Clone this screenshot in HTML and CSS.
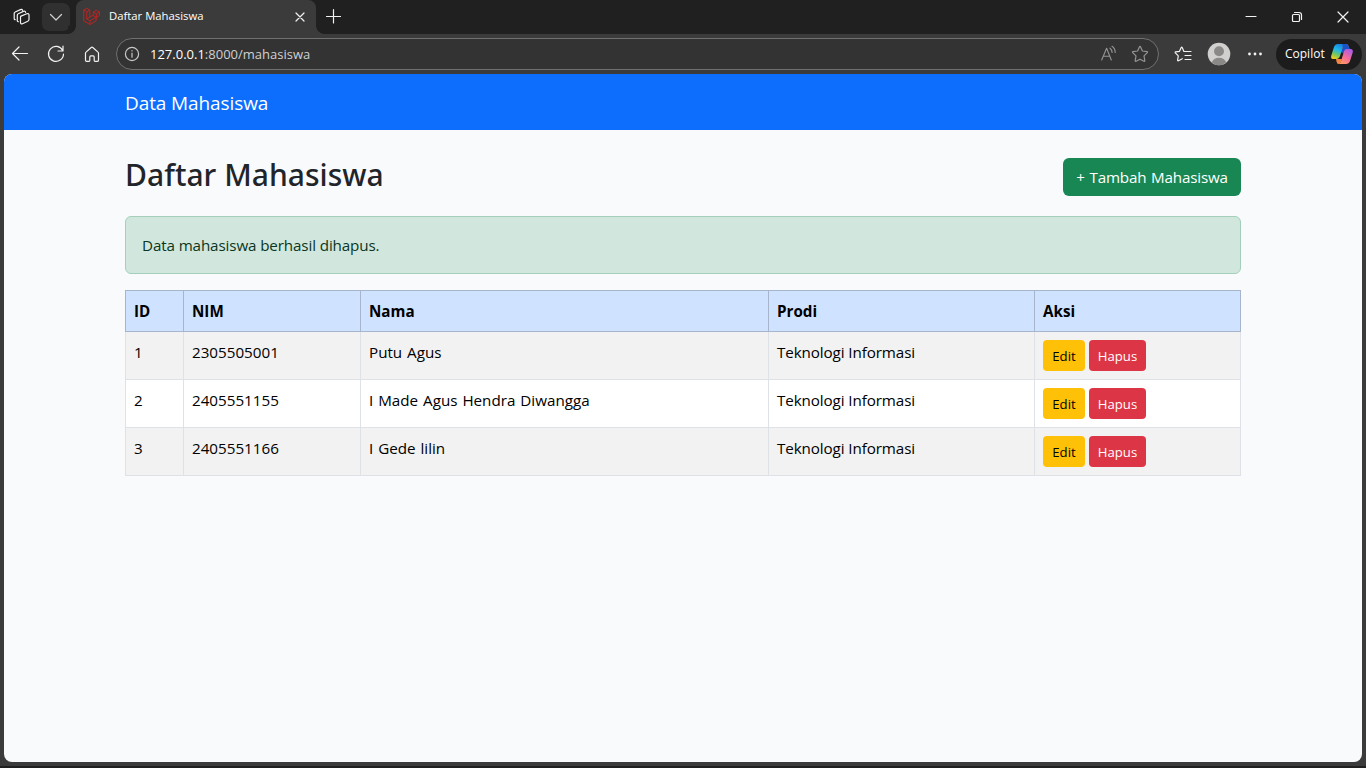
FILE: index.html
```html
<!DOCTYPE html>
<html lang="id">
<head>
<meta charset="utf-8">
<title>Daftar Mahasiswa</title>
<link rel="stylesheet" href="styles.css">
</head>
<body>
<div class="browser">
  <header class="tabstrip">
    <div class="workspaces">
      <svg width="18" height="18" viewBox="0 0 18 18" class="icon"><path d="M8 8.100 13.800 5.800Q16 5 16 7.100V11.600Q16 12.800 14.800 13.300L9.500 15.700Q7.500 16.500 7.500 14.600V9.200Q7.500 8.300 8 8.100ZM5.300 13.700Q4.300 13.800 4.300 12.500V7.300Q4.300 6.200 5.300 5.800L10.400 3.400Q12.300 2.700 12.600 4.300M2.200 11.600Q1.200 11.600 1.200 10.400V5.500Q1.200 4.400 2.200 4L7.400 1.600Q9.200.9 9.500 2.300"/></svg>
    </div>
    <div class="tab-search">
      <svg width="14" height="14" viewBox="0 0 14 14" class="icon dim"><path d="M1.500 4.500 7 10l5.500-5.500"/></svg>
    </div>
    <div class="tab">
      <svg width="17" height="17" viewBox="-.5 0 50 52" class="laravel"><path d="M.7 6.500 10 1l9.400 5.500L10 12zM.7 6.500V39.300L19.400 50.500 38.600 39.300V28.800M10 12V33.600L19.400 28V6.500M10 33.600 19.400 39.300 48.900 22.900V12.500L39.400 7 30 12.500V22L19.400 28M19.400 39.300V50.500M30 12.500 39.400 18 48.900 12.500M39.400 18V28.800L30 23.300"/></svg>
      <span class="tab-title">Daftar Mahasiswa</span>
      <svg width="10" height="10" viewBox="0 0 10 10" class="icon tab-close"><path d="m1 1 8 8M9 1 1 9"/></svg>
    </div>
    <svg width="16" height="16" viewBox="0 0 16 16" class="icon new-tab"><path d="M8.500 1.500V15M1.500 8.500H15.500"/></svg>
    <div class="window-controls">
      <svg width="12" height="12" viewBox="0 0 12 12" class="icon"><path d="M1 5.500H11"/></svg>
      <svg width="12" height="12" viewBox="0 0 12 12" class="icon"><rect x="1.500" y="3.500" width="7" height="7" rx="1"/><path d="M3.500 1.500H8Q10.500 1.500 10.500 4V8.500"/></svg>
      <svg width="12" height="12" viewBox="0 0 12 12" class="icon"><path d="m1 1 10 10M11 1 1 11"/></svg>
    </div>
  </header>

  <div class="toolbar">
    <svg width="18" height="18" viewBox="0 0 18 18" class="icon"><path d="M16.500 8.500H1.500M8 2 1.500 8.500 8 15"/></svg>
    <svg width="18" height="18" viewBox="0 0 18 18" class="icon"><path d="M15.700 5.500A7.500 7.500 0 1 0 16.500 9M16 1V6H11"/></svg>
    <svg width="18" height="18" viewBox="0 0 18 18" class="icon"><path d="M2.500 8.200Q2.500 7.500 3 7.100L8.200 2.500Q9 1.900 9.800 2.500L15 7.100Q15.500 7.500 15.500 8.200V15Q15.500 16.300 14.500 16.300H12Q11.200 16.300 11.200 15.500V12Q11.200 10.900 10.200 10.900H7.800Q6.800 10.900 6.800 12V15.500Q6.800 16.300 6 16.300H3.500Q2.500 16.300 2.500 15z"/></svg>
    <div class="address">
      <svg width="16" height="16" viewBox="0 0 16 16" class="icon info"><circle cx="8" cy="8" r="6.600"/><path d="M8 7.200V11.200M8 4.700V5"/></svg>
      <span class="url"><b>127.0.0.1</b>:8000/mahasiswa</span>
      <svg width="18" height="18" viewBox="0 0 18 18" class="icon read"><path d="M1.700 15 6.600 3.200 11.300 15M3.300 11.200H9.700M10 3.200Q12 4.700 12.100 7.500M12 1.300Q15.200 3.500 15.200 7.500"/></svg>
      <svg width="18" height="18" viewBox="0 0 18 18" class="icon star"><path d="M8.400 1.900Q9 1 9.600 1.900L11.400 6 16 6.600Q16.900 6.900 16.300 7.600L13 10.900 13.800 15.700Q13.800 16.600 12.900 16.300L9 14.200 5.100 16.300Q4.200 16.600 4.200 15.700L5 10.900 1.700 7.600Q1.100 6.900 2 6.600L6.600 6z"/></svg>
    </div>
    <svg width="18" height="18" viewBox="0 0 18 18" class="icon favorites"><path d="M11.500 6.500H9.900L8.200 2.500Q7.700 1.700 7.200 2.500L5.500 6.300 1.600 6.900Q.8 7.100 1.300 7.800L4.300 10.800 3.600 15.200Q3.600 16 4.500 15.700L8.300 13.700M11 6.500H17M11 10.500H17M11 14.500H17"/></svg>
    <svg width="24" height="24" viewBox="0 0 24 24" class="avatar"><circle cx="12" cy="12" r="11.300" fill="#d2d0ce"/><circle cx="12" cy="9.200" r="5" fill="#8b8987"/><path d="M4.800 20.500Q6.500 15.800 12 15.800T19.200 20.500Q16 23.300 12 23.300T4.800 20.500Z" fill="#8b8987"/></svg>
    <svg width="16" height="4" viewBox="0 0 16 4" class="more"><circle cx="2.500" cy="2" r="1.400"/><circle cx="8" cy="2" r="1.400"/><circle cx="13.500" cy="2" r="1.400"/></svg>
    <div class="copilot">
      <span>Copilot</span>
      <svg width="24" height="22" viewBox="0 0 24 22">
        <defs>
          <linearGradient id="cool" x1="0.600" y1="0" x2="0.200" y2="1"><stop offset="0" stop-color="#1683de"/><stop offset=".4" stop-color="#21b8e8"/><stop offset=".68" stop-color="#70c766"/><stop offset="1" stop-color="#f5d018"/></linearGradient>
          <linearGradient id="warm" x1=".8" y1="0" x2=".2" y2="1"><stop offset="0" stop-color="#a75bea"/><stop offset=".5" stop-color="#f36a9e"/><stop offset="1" stop-color="#ff9a60"/></linearGradient>
        </defs>
        <path d="M12 1H16.500Q18 1 18.700 3.500L19.500 6H17Q15 6 14.300 8.300L12 16Q10.500 21 8.500 21 7 21 6.500 18.500L6 16z" fill="#f58443"/>
        <path d="M8 1H15.500Q13.500 1.500 12.600 4.500L10 13Q9 16 6.500 16H3Q.5 16 1.300 12.500L4 4Q5 1 8 1Z" fill="url(#cool)"/>
        <path d="M12 1H16.500Q18 1 18.700 3.500L19.500 6H17Q15 6 14.300 8.300L13.700 10.500 11.300 9 12.600 4.500Q13 1.800 12 1Z" fill="#1754ca"/>
        <path d="M11.300 9 13.700 10.500 12 16H6.500Q9 16 10 13Z" fill="#1f1f1f"/>
        <path d="M16.500 6H20.500Q23.500 6 22.700 9.500L20 18Q19 21 16 21H8.500Q10.500 20.500 11.300 17.500L14 8.500Q14.800 6 16.500 6Z" fill="url(#warm)"/>
      </svg>
    </div>
  </div>

  <div class="page">
    <nav class="navbar"><div class="container"><a class="brand">Data Mahasiswa</a></div></nav>
    <main class="container">
      <div class="heading">
        <h1>Daftar Mahasiswa</h1>
        <a class="btn btn-success">+ Tambah Mahasiswa</a>
      </div>
      <div class="alert">Data mahasiswa berhasil dihapus.</div>
      <table class="table">
        <colgroup><col class="c-id"><col class="c-nim"><col class="c-nama"><col class="c-prodi"><col class="c-aksi"></colgroup>
        <thead><tr><th>ID</th><th>NIM</th><th>Nama</th><th>Prodi</th><th>Aksi</th></tr></thead>
        <tbody>
          <tr><td>1</td><td>2305505001</td><td class="name">Putu Agus</td><td class="program">Teknologi Informasi</td><td><div class="actions"><a class="btn-sm edit">Edit</a><a class="btn-sm delete">Hapus</a></div></td></tr>
          <tr><td>2</td><td>2405551155</td><td class="name">I Made Agus Hendra Diwangga</td><td class="program">Teknologi Informasi</td><td><div class="actions"><a class="btn-sm edit">Edit</a><a class="btn-sm delete">Hapus</a></div></td></tr>
          <tr><td>3</td><td>2405551166</td><td class="name">I Gede lilin</td><td class="program">Teknologi Informasi</td><td><div class="actions"><a class="btn-sm edit">Edit</a><a class="btn-sm delete">Hapus</a></div></td></tr>
        </tbody>
      </table>
    </main>
  </div>
  <div class="edge"></div>
</div>
</body>
</html>
```
FILE: styles.css
```css
* { box-sizing: border-box; }
body { margin: 0; overflow: hidden; font: 15.2px/24px "Open Sans", "Noto Sans", sans-serif; color: #212529; }
svg { display: block; flex: none; }
.browser { width: 1366px; height: 768px; display: flex; flex-direction: column; background: #3b3b3b; }
.icon { fill: none; stroke: #f2f2f2; stroke-width: 1.2; stroke-linecap: round; stroke-linejoin: round; }
.dim { stroke: #d0d0d0; }

.tabstrip { height: 34px; flex: none; display: flex; align-items: center; background: #202020; padding-left: 13px; }
.workspaces { width: 29px; }
.tab-search { width: 28px; height: 28px; border-radius: 7px; background: #303030; display: grid; place-items: center; }
.tab { position: relative; width: 240px; height: 34px; margin-left: 6px; padding: 0 11px 2px 7px; display: flex; align-items: center; background: #3b3b3b; border-radius: 8px 8px 0 0; color: #fff; font-size: 11.3px; }
.tab::before, .tab::after { content: ""; position: absolute; bottom: 0; width: 8px; height: 8px; }
.tab::before { left: -8px; background: radial-gradient(circle at 0 0, #202020 7.5px, #3b3b3b 8px); }
.tab::after { right: -8px; background: radial-gradient(circle at 100% 0, #202020 7.5px, #3b3b3b 8px); }
.laravel { fill: none; stroke: #c5221f; stroke-width: 2.9; stroke-linejoin: round; }
.tab-title { margin-left: 9px; }
.tab-close { margin: 1px 0 0 auto; }
.new-tab { margin: -2px 0 0 9px; }
.window-controls { margin-left: auto; display: flex; gap: 34px; padding-right: 17px; }

.toolbar { height: 40px; flex: none; display: flex; align-items: center; padding: 0 5px 0 11px; gap: 18px; }
.address { width: 1043px; flex: none; height: 32px; margin-left: -3px; padding: 0 9px 0 7px; display: flex; align-items: center; border: 1px solid #707070; border-radius: 16px; background: #333; color: #d0d0d0; font-size: 13px; }
.info { stroke: #c8c8c8; }
.url { margin-left: 10px; }
.url b { color: #fff; font-weight: 400; }
.read { margin-left: auto; stroke: #949494; stroke-width: 1.1; }
.star { margin-left: 13px; stroke: #949494; }
.favorites { margin-left: -3px; }
.avatar { margin-left: -3px; }
.more { fill: #f2f2f2; margin-left: -2px; }
.copilot { width: 86px; flex: none; height: 31px; margin-left: -5px; padding: 0 8px 0 9px; display: flex; align-items: center; justify-content: space-between; border-radius: 16px; background: #1c1c1c; color: #fff; font-size: 12px; }

.page { height: 688px; flex: none; margin: 0 4px; background: #f8fafc; border-radius: 8px; overflow: hidden; }
.edge { height: 2px; margin-top: auto; background: #202020; }
.container { width: 1116px; margin: 0 auto; }
.navbar { height: 56px; background: #0d6efd; }
.brand { display: block; padding-top: 14px; line-height: 30px; font-size: 19px; letter-spacing: -.1px; color: #fff; }
.heading { display: flex; justify-content: space-between; align-items: center; padding-top: 24px; height: 70px; }
.heading h1 { margin: -4px 0 0; font-family: "Noto Sans", sans-serif; font-size: 30px; line-height: 38px; font-weight: 500; letter-spacing: .03px; }
.btn { padding: 7px 0; border-radius: 6px; line-height: 24px; text-align: center; }
.btn-success { width: 178px; background: #198754; color: #fff; letter-spacing: -.18px; word-spacing: 1px; }
.alert { height: 58px; margin: 16px 0; padding: 16px; border: 1px solid #a3cfbb; border-radius: 6px; background: #d1e7dd; color: #0a3622; letter-spacing: -.12px; }
.table { width: 1116px; table-layout: fixed; border-collapse: collapse; color: #000; }
.c-id { width: 58px; }
.c-nim { width: 177px; }
.c-nama { width: 408px; }
.c-prodi { width: 266px; }
.c-aksi { width: 206px; }
th, td { padding: 8px; text-align: left; vertical-align: top; border: 1px solid #dee2e6; }
th { background: #cfe2ff; border-color: #a6b5cc; }
tbody td { background: #fff; }
tbody tr:nth-child(odd) td { background: #f2f2f2; }
.name { word-spacing: 1px; }
.program { letter-spacing: -.1px; }
.actions { display: flex; gap: 4px; }
.btn-sm { height: 31px; padding: 6px 0 4px; line-height: 21px; border-radius: 4px; font-size: 13.2px; text-align: center; }
.edit { width: 42px; background: #ffc107; color: #000; }
.delete { width: 57px; background: #dc3545; color: #fff; }
```
